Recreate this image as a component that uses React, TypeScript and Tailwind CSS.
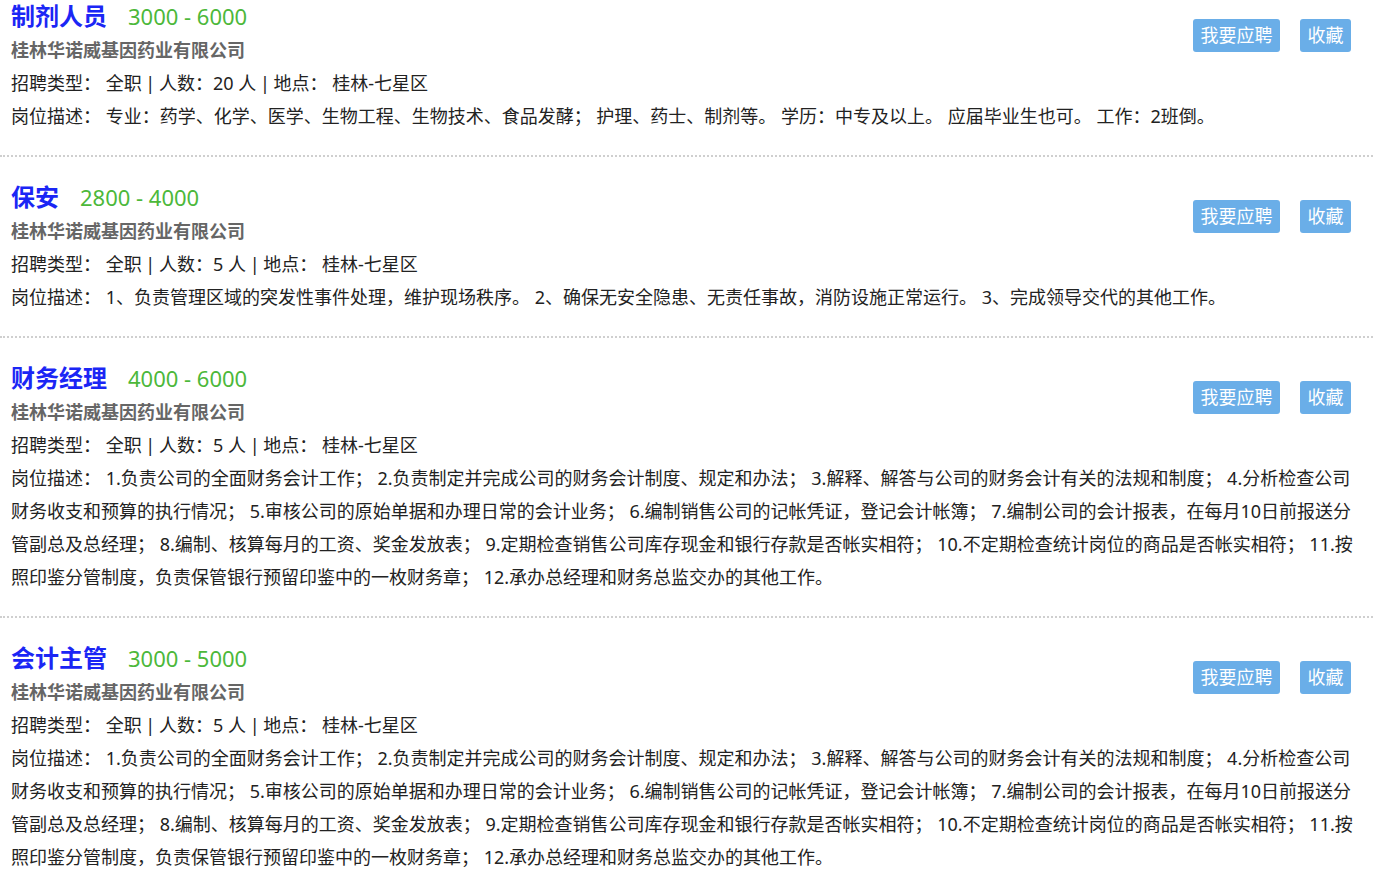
const jobs = [
  {
    title: "制剂人员",
    salary: "3000 - 6000",
    company: "桂林华诺威基因药业有限公司",
    type: "全职",
    count: "20",
    place: "桂林-七星区",
    desc: "专业：药学、化学、医学、生物工程、生物技术、食品发酵； 护理、药士、制剂等。 学历：中专及以上。 应届毕业生也可。 工作：2班倒。",
  },
  {
    title: "保安",
    salary: "2800 - 4000",
    company: "桂林华诺威基因药业有限公司",
    type: "全职",
    count: "5",
    place: "桂林-七星区",
    desc: "1、负责管理区域的突发性事件处理，维护现场秩序。 2、确保无安全隐患、无责任事故，消防设施正常运行。 3、完成领导交代的其他工作。",
  },
  {
    title: "财务经理",
    salary: "4000 - 6000",
    company: "桂林华诺威基因药业有限公司",
    type: "全职",
    count: "5",
    place: "桂林-七星区",
    desc: "1.负责公司的全面财务会计工作； 2.负责制定并完成公司的财务会计制度、规定和办法； 3.解释、解答与公司的财务会计有关的法规和制度； 4.分析检查公司财务收支和预算的执行情况； 5.审核公司的原始单据和办理日常的会计业务； 6.编制销售公司的记帐凭证，登记会计帐簿； 7.编制公司的会计报表，在每月10日前报送分管副总及总经理； 8.编制、核算每月的工资、奖金发放表； 9.定期检查销售公司库存现金和银行存款是否帐实相符； 10.不定期检查统计岗位的商品是否帐实相符； 11.按照印鉴分管制度，负责保管银行预留印鉴中的一枚财务章； 12.承办总经理和财务总监交办的其他工作。",
  },
  {
    title: "会计主管",
    salary: "3000 - 5000",
    company: "桂林华诺威基因药业有限公司",
    type: "全职",
    count: "5",
    place: "桂林-七星区",
    desc: "1.负责公司的全面财务会计工作； 2.负责制定并完成公司的财务会计制度、规定和办法； 3.解释、解答与公司的财务会计有关的法规和制度； 4.分析检查公司财务收支和预算的执行情况； 5.审核公司的原始单据和办理日常的会计业务； 6.编制销售公司的记帐凭证，登记会计帐簿； 7.编制公司的会计报表，在每月10日前报送分管副总及总经理； 8.编制、核算每月的工资、奖金发放表； 9.定期检查销售公司库存现金和银行存款是否帐实相符； 10.不定期检查统计岗位的商品是否帐实相符； 11.按照印鉴分管制度，负责保管银行预留印鉴中的一枚财务章； 12.承办总经理和财务总监交办的其他工作。",
  },
]

const JobItem = ({ job }: { job: any }) => {
  return (
    <div className="px-[11px] pt-[22px] pb-[22px] border-b-2 border-dotted border-[#cfcfcf]">
      {/* buttons */}
      <div className="float-right flex gap-[20px] mt-[21px] mr-[11px]">
        <button className="h-[33px] px-[7.5px] rounded-[3px] bg-[#6aaee8] text-white text-[18px] leading-[33px]">
          我要应聘
        </button>
        <button className="h-[33px] px-[7.5px] rounded-[3px] bg-[#6aaee8] text-white text-[18px] leading-[33px]">
          收藏
        </button>
      </div>
      <div className="flex items-baseline h-[36px] leading-[36px]">
        <span className="text-[24px] font-bold text-[#1b26f5]">{job.title}</span>
        <span className="ml-[21px] text-[22px] text-[#4cb83a]">{job.salary}</span>
      </div>
      <p className="text-[18px] leading-[33px] font-bold text-[#666]">{job.company}</p>
      <p className="text-[18px] leading-[33px] text-[#222]">
        招聘类型： 全职<span className="mx-[-1px]"> | </span>人数：{job.count} 人<span className="mx-[-1px]"> | </span>地点： {job.place}
      </p>
      <p className="text-[18px] leading-[33px] text-[#222]">岗位描述： {job.desc}</p>
    </div>
  )
}

export default function App() {
  return (
    <div
      className="min-h-[872px] bg-white overflow-hidden"
      style={{ fontFamily: '"Noto Sans", "Noto Sans CJK SC", sans-serif' }}
    >
      <div className="w-[1373px] -mt-[24px]">
        {jobs.map((job, i) => (
          <JobItem key={i} job={job} />
        ))}
      </div>
    </div>
  )
}
